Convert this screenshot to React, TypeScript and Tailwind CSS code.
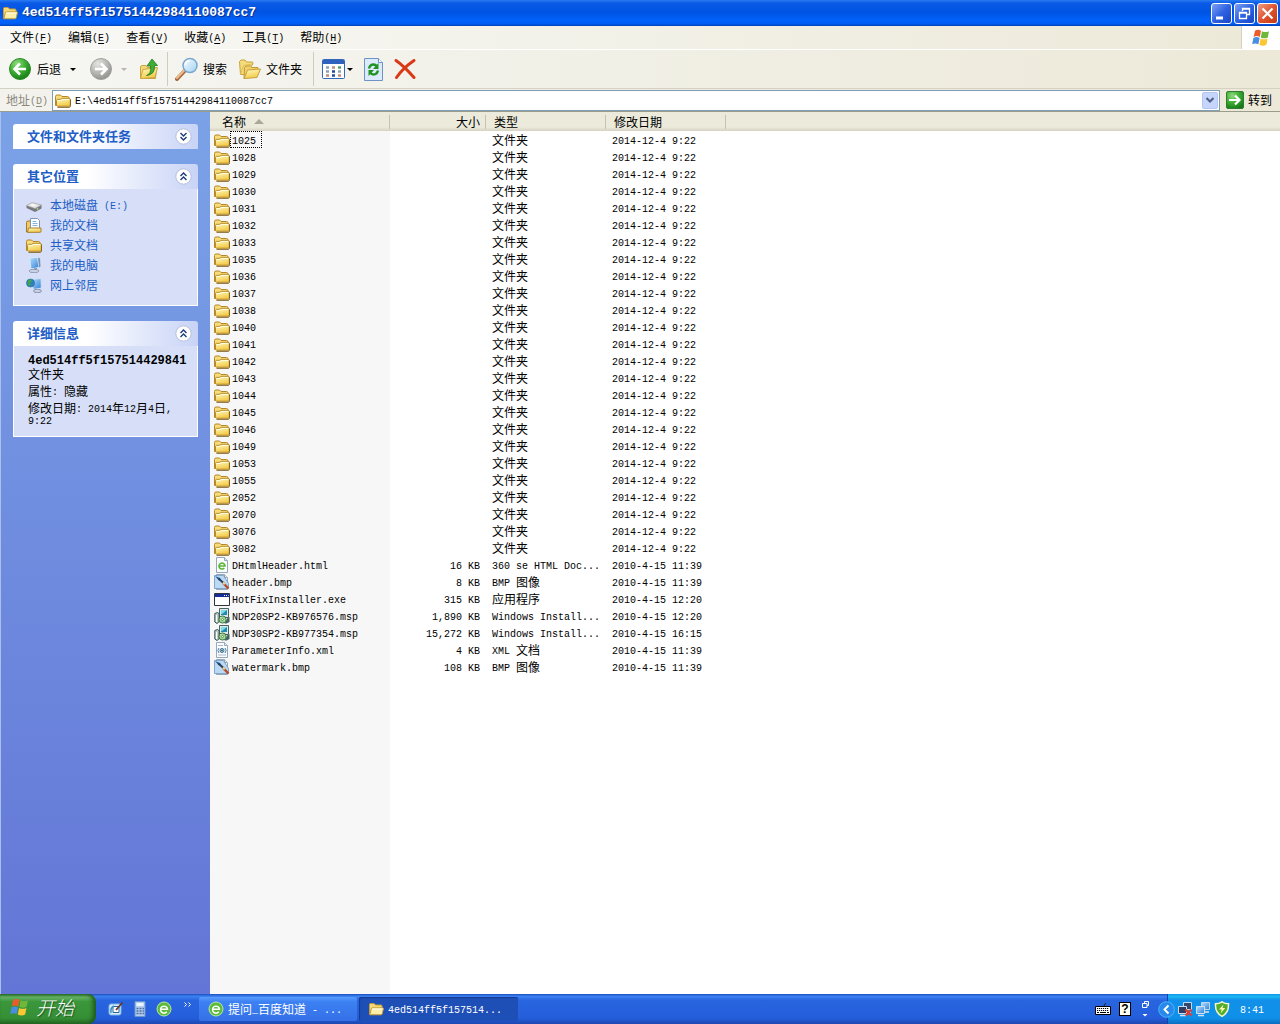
import { useState } from 'react';
import type { ReactNode } from 'react';

const folders = [
  '1025', '1028', '1029', '1030', '1031', '1032', '1033', '1035', '1036', '1037', '1038', '1040', '1041',
  '1042', '1043', '1044', '1045', '1046', '1049', '1053', '1055', '2052', '2070', '3076', '3082',
];

type FileRow = { name: string; kind: string; size: string; type: string; date: string };

const rows: FileRow[] = [
  ...folders.map(name => ({ name, kind: 'folder', size: '', type: '文件夹', date: '2014-12-4 9:22' })),
  { name: 'DHtmlHeader.html', kind: 'html', size: '16 KB', type: '360 se HTML Doc...', date: '2010-4-15 11:39' },
  { name: 'header.bmp', kind: 'bmp', size: '8 KB', type: 'BMP 图像', date: '2010-4-15 11:39' },
  { name: 'HotFixInstaller.exe', kind: 'exe', size: '315 KB', type: '应用程序', date: '2010-4-15 12:20' },
  { name: 'NDP20SP2-KB976576.msp', kind: 'msp', size: '1,890 KB', type: 'Windows Install...', date: '2010-4-15 12:20' },
  { name: 'NDP30SP2-KB977354.msp', kind: 'msp', size: '15,272 KB', type: 'Windows Install...', date: '2010-4-15 16:15' },
  { name: 'ParameterInfo.xml', kind: 'xml', size: '4 KB', type: 'XML 文档', date: '2010-4-15 11:39' },
  { name: 'watermark.bmp', kind: 'bmp', size: '108 KB', type: 'BMP 图像', date: '2010-4-15 11:39' },
];

const menus = [
  ['文件', 'F'], ['编辑', 'E'], ['查看', 'V'], ['收藏', 'A'], ['工具', 'T'], ['帮助', 'H'],
];

// Latin runs are set half as wide as the Chinese characters
const Mixed = ({ text }: { text: string }) => <>
    {text.split(/([\x20-\x7e]+)/).filter(Boolean).map((part, i) => /^[\x20-\x7e]/.test(part)
      ? <span key={i} className="font-['Liberation_Mono',monospace] text-[10px] leading-none align-[1px] whitespace-pre">{part}</span>
      : part)}
  </>;

const Defs = () => <svg className="absolute w-0 h-0" aria-hidden="true">
    <defs>
      <linearGradient id="gold" x1="0" y1="0" x2="0.4" y2="1"><stop offset="0" stopColor="#fffbc4" /><stop offset="1" stopColor="#f3cb4a" /></linearGradient>
      <radialGradient id="green" cx="0.35" cy="0.25" r="0.8"><stop offset="0" stopColor="#8fdc7c" /><stop offset="0.5" stopColor="#3fae35" /><stop offset="1" stopColor="#157a14" /></radialGradient>
      <radialGradient id="gray" cx="0.35" cy="0.25" r="0.8"><stop offset="0" stopColor="#e4e4e2" /><stop offset="0.6" stopColor="#b3b3b0" /><stop offset="1" stopColor="#8d8d8b" /></radialGradient>
      <linearGradient id="lens" x1="0" y1="0" x2="1" y2="1"><stop offset="0" stopColor="#fafdff" /><stop offset="1" stopColor="#9fd3f2" /></linearGradient>
      <linearGradient id="screen" x1="0" y1="0" x2="1" y2="1"><stop offset="0" stopColor="#b9e2ff" /><stop offset="1" stopColor="#2f7fd6" /></linearGradient>
    </defs>
  </svg>;

const Folder = () => <svg className="w-4 h-4 shrink-0" viewBox="0 0 16 16">
    <path d="M.5 13.500V4.500Q.5 3 2 3h3.500L7 4.500h5.500Q14 4.500 14 6v7.500z" fill="#f7dd7a" stroke="#b5862a" />
    <path d="M1.500 13.500V8.500Q1.500 7.300 2.700 7.300h3L7 6.300h7q1.300 0 1.300 1.200V13q0 1.200-1.200 1.200H2.500z" fill="url(#gold)" stroke="#b98b2c" />
    <path d="M2.500 15.300h12q1.100-.4 1.100-1.800V7.500" fill="none" stroke="#7d5d1c" />
    <path d="M2.800 8.500h3.400l1.400-1H14" fill="none" stroke="#fffde2" />
  </svg>;

const OpenFolder = () => <svg className="w-4 h-4 shrink-0" viewBox="0 0 16 16">
    <path d="M1.500 13.500V3.500q0-1 1-1h3.600L7.500 4H13q1 0 1 1v2" fill="#f4d975" stroke="#c69a34" />
    <path d="M1.800 13.800l1.500-6q.3-1 1.300-1h10q1 0 .8 1l-1.200 5q-.2 1-1.200 1z" fill="#fcefaa" stroke="#c49a35" />
    <path d="M4 8h10.500" stroke="#fffef0" />
  </svg>;

const ELogo = () => <svg className="w-4 h-4 shrink-0" viewBox="0 0 16 16">
    <circle cx="8" cy="8" r="7" fill="#5dbb3c" stroke="#b9e89f" />
    <path d="M4.500 8.300h7A3.500 3.500 0 1 0 10.800 10.800" fill="none" stroke="#fff" strokeWidth="1.500" />
  </svg>;

const FileIcon = ({ kind }: { kind: string }) => {
  if (kind === 'folder') return <Folder />;
  if (kind === 'exe') return <svg className="w-4 h-4 shrink-0" viewBox="0 0 16 16">
      <path d="M.5 2.500h15v12H.5z" fill="#fff" stroke="#30323c" />
      <path d="M1 3h14v3H1z" fill="#152d98" />
      <path d="M10 4.500h1M12 4.500h1M14 4.500h.6" stroke="#fff" />
    </svg>;
  if (kind === 'msp') return <svg className="w-4 h-4 shrink-0" viewBox="0 0 16 16">
      <path d="M5.500.5h9v9h-9z" fill="#e2e8e6" stroke="#47625f" />
      <path d="M7 2h6v5H7z" fill="#218ab3" />
      <path d="M7 2h6L8 6H7z" fill="#7bdde8" />
      <path d="M13.500 10l2-1v5l-3 1.500h-2z" fill="#436360" />
      <path d="M.8 5.500l2.800-1 1.500 1.200v8L3 15.500.8 14z" fill="#c2cdca" stroke="#34534f" />
      <path d="M2.500 7v7" stroke="#f8fff8" />
      <circle cx="8.500" cy="11.500" r="3.600" fill="#9bd489" stroke="#205e35" strokeWidth=".8" />
      <path d="M6.500 9l2 2.400 2.700 1.800" stroke="#ddfacc" />
      <circle cx="8.500" cy="11.500" r="1" fill="#fff" stroke="#346d38" strokeWidth=".6" />
    </svg>;
  return <svg className="w-4 h-4 shrink-0" viewBox="0 0 16 16">
      <path d="M2.500.5h8l3 3v12h-11z" fill="#fbfcff" stroke="#95a8ba" />
      <path d="M10.500.5v3h3" fill="#dce7f0" stroke="#95a8ba" />
      {kind === 'html' && <path d="M5 9h6A3 3 0 1 0 10.300 11" fill="none" stroke="#58b531" strokeWidth="1.600" />}
      {kind === 'bmp' && <>
          <path d="M.5 1.500h9l5 8v5H.5z" fill="#b9d9f5" stroke="#6087b6" strokeWidth=".7" />
          <path d="M1 2l5 2 1.500 3-3-1z" fill="#1d5698" />
          <path d="M4.500 4.500l5.500 5" stroke="#2b3f55" strokeWidth="2" />
          <path d="M9.500 9.300l5 5.200" stroke="#b44f2c" strokeWidth="2.400" />
          <path d="M9 8.500l1.800 1.800" stroke="#f5d694" strokeWidth="2" />
        </>}
      {kind === 'xml' && <>
          <path d="M4 3.500h5M4 13h8" stroke="#a8b8cb" />
          <path d="M5 6L3.800 8.500 5 11M11 6l1.200 2.500L11 11" fill="none" stroke="#437fad" />
          <circle cx="8" cy="8.500" r="2" fill="#b2d6df" stroke="#3b6986" />
          <circle cx="8" cy="8.500" r=".8" fill="#234a5a" />
        </>}
    </svg>;
};

const Flag = ({ className = 'w-5 h-5' }: { className?: string }) => <svg className={className + ' shrink-0'} viewBox="0 0 20 20">
    <path d="M4 2.800q3-2 6 0L8.800 9q-3-1.800-6.200 0z" fill="#ec5b2b" />
    <path d="M11 3.200q3.500 1.800 7 0l-1.200 6.200q-3.500 1.800-7 0z" fill="#6fb83c" />
    <path d="M2.400 10q3.200-1.800 6.200 0l-1.200 6.300q-3-1.800-6.200 0z" fill="#4a8ee4" />
    <path d="M9.600 10.400q3.500 1.800 7 0l-1.200 6.300q-3.500 1.900-7 0z" fill="#fbc732" />
  </svg>;

const Caret = ({ className = 'fill-black' }: { className?: string }) => <svg className={'w-[6px] h-[3px] ' + className} viewBox="0 0 6 3"><path d="M0 0h6L3 3z" /></svg>;

const Arrow = ({ gray = false }: { gray?: boolean }) => <svg className="w-[22px] h-[22px]" viewBox="0 0 22 22">
    <circle cx="11" cy="11" r="10.500" fill={gray ? 'url(#gray)' : 'url(#green)'} stroke={gray ? '#a0a09e' : '#2b8a28'} />
    <path d={gray ? 'M5 11h11M11 5.500l5.500 5.500-5.500 5.500' : 'M17 11H6M11 5.500L5.500 11l5.500 5.500'} fill="none" stroke="#fff" strokeWidth="2.600" />
  </svg>;

const Monitor = ({ mark }: { mark: string }) => <svg className="w-4 h-4 shrink-0" viewBox="0 0 16 16">
    {mark === 'pc' && <>
        <path d="M3.500 1l8-.5 1.500 10-8 1.500z" fill="url(#screen)" stroke="#d6e9fb" />
        <path d="M12 .5l2 1 .5 8-1.500 1z" fill="#7890b8" />
        <path d="M8 11h3v2H8z" fill="#8ea0c2" />
        <ellipse cx="8" cy="14" rx="5" ry="1.700" fill="#c9d2e3" stroke="#7b88a4" strokeWidth=".7" />
      </>}
    {mark === 'net' && <>
        <path d="M4.500 2.500L15 1.500l.3 9.500-7.800 1.500z" fill="url(#screen)" stroke="#d0dff5" />
        <ellipse cx="11.500" cy="14" rx="4" ry="1.700" fill="#cad1e0" stroke="#69779a" strokeWidth=".7" />
        <circle cx="4.500" cy="6" r="4" fill="#2d83bd" stroke="#20639a" strokeWidth=".6" />
        <path d="M2 3.500q2-2 4-1L5 5 3.500 6 5 8 4 9.500 1.500 7z" fill="#46a44b" />
      </>}
    {(mark === 'tray' || mark === 'off') && <>
        <path d="M6.500 1.500h8v7h-8z" fill={mark === 'off' ? '#34486f' : 'url(#screen)'} stroke="#bdd9f5" />
        <path d="M1.500 5.500h8v7h-8z" fill={mark === 'off' ? '#2d3e62' : 'url(#screen)'} stroke="#cbe1f7" />
        <path d="M3 14.500h6M10 11h4" stroke="#d9e4ef" strokeWidth="1.500" />
        {mark === 'off' && <path d="M8.500 8.500l6 6M14.500 8.500l-6 6" stroke="#e23c2c" strokeWidth="2.200" />}
      </>}
  </svg>;

const Disk = () => <svg className="w-4 h-4 shrink-0" viewBox="0 0 16 16">
    <path d="M.5 8.500L6 6l9.500 2v3.500L9 15l-8.500-4z" fill="#77787f" />
    <path d="M.5 8.500L6 5.500 15.500 8 9 11.500z" fill="#e4e3e1" stroke="#a0a0a5" strokeWidth=".6" />
    <path d="M3.500 8.300L6.500 7l4 1L8 9.500z" fill="#f9f9f9" />
    <circle cx="11.500" cy="11.800" r=".9" fill="#9be46d" />
  </svg>;

const Docs = () => <svg className="w-4 h-4 shrink-0" viewBox="0 0 16 16">
    <path d="M.5 15V5.500Q.5 4 2 4h3v11z" fill="#efc966" stroke="#a47a2e" />
    <path d="M4.500 1.500h7l2 2v9h-9z" fill="#fff" stroke="#7d95b6" />
    <path d="M6.500 4.500h4M6.500 6.500h5M6.500 8.500h5" stroke="#83b4d9" />
    <path d="M1.500 15.300l1-4.300h12.500v3.300q0 1-1 1z" fill="url(#gold)" stroke="#ab8132" />
  </svg>;

const Toggle = ({ open, onClick, label }: { open: boolean; onClick: () => void; label: string }) => <button aria-label={label} onClick={onClick} className="w-[17px] h-[17px]">
    <svg viewBox="0 0 17 17" className="w-full h-full">
      <circle cx="8.500" cy="8.500" r="7.700" fill="#fff" stroke="#b3bedb" />
      <path d={open ? 'M5.500 8l3-3 3 3M5.500 12l3-3 3 3' : 'M5.500 5l3 3 3-3M5.500 9l3 3 3-3'} fill="none" stroke="#1d3b78" strokeWidth="1.400" />
    </svg>
  </button>;

const Panel = ({ title, initial, children }: { title: string; initial: boolean; children?: ReactNode }) => {
  const [open, setOpen] = useState(initial);
  return <section>
      <div className="flex items-center justify-between h-[25px] pl-3.5 pr-1.5 rounded-t-[3px] bg-linear-to-r from-white from-40% to-[#c8d3f6]">
        <h2 className="text-[13px] leading-5 pb-0.5 font-bold text-[#215dc6]">{title}</h2>
        <Toggle open={open} onClick={() => setOpen(!open)} label={title} />
      </div>
      {open && children && <div className="border border-t-0 border-white bg-[#d6dff7]">{children}</div>}
    </section>;
};

const Divider = () => <span className="w-px h-[34px] bg-[#cfccbc]" />;

const Win = ({ label, red = false, children }: { label: string; red?: boolean; children: ReactNode }) => <button aria-label={label} className={`w-[21px] h-[21px] rounded-[3px] border border-white ${red ? 'bg-linear-to-br from-[#ee9a80] via-[#e0532f] to-[#c33c14]' : 'bg-linear-to-br from-[#7d9ff2] via-[#2f62e2] to-[#1846c6]'}`}>
    <svg viewBox="0 0 19 19" fill="none" stroke="#fff" className="w-full h-full">{children}</svg>
  </button>;

const places = [
  { text: '本地磁盘 (E:)', icon: <Disk /> },
  { text: '我的文档', icon: <Docs /> },
  { text: '共享文档', icon: <Folder /> },
  { text: '我的电脑', icon: <Monitor mark="pc" /> },
  { text: '网上邻居', icon: <Monitor mark="net" /> },
];

const TitleBar = () => <header className="flex items-center h-[26px] pl-0.5 pr-0.5 bg-[linear-gradient(to_bottom,#2a7cf0_0%,#0a5ae6_12%,#0053e2_45%,#0062fb_80%,#005cf2_92%,#0040b4_100%)]">
    <OpenFolder />
    <h1 className="flex-1 pl-1 text-[13px] font-bold font-['Liberation_Mono',monospace] text-white text-shadow-[1px_1px_0_#0b2f8a]">4ed514ff5f15751442984110087cc7</h1>
    <div className="flex gap-0.5">
      <Win label="最小化"><path d="M4 14h7" strokeWidth="3" /></Win>
      <Win label="还原"><path d="M7.500 7V4.500h7v6H12M7 5h8M4.500 8.500h7v6h-7zM4 9h8" strokeWidth="1.300" /></Win>
      <Win label="关闭" red><path d="M4.500 4.500l10 10M14.500 4.500l-10 10" strokeWidth="2.200" /></Win>
    </div>
  </header>;

const Toolbar = () => <div className="flex items-center h-10 pl-[9px] border-t border-b border-t-white border-b-[#d5d2c4] bg-linear-to-r from-[#f6f6f3] to-[#ece9d8]">
    <button className="flex items-center gap-1.5"><Arrow />后退</button>
    <button aria-label="后退列表" className="ml-[9px]"><Caret /></button>
    <button aria-label="前进" className="ml-3.5"><Arrow gray /></button>
    <button aria-label="前进列表" className="ml-[9px] mr-3"><Caret className="fill-[#b8b6aa]" /></button>
    <button aria-label="向上" className="mr-2">
      <svg className="w-5 h-[22px]" viewBox="0 0 20 22">
        <path d="M1.500 20.500V8.500l1.500-1h4l1.500 2h9l-1 11z" fill="#f3d972" stroke="#c8a243" />
        <path d="M1.500 20.500l2.500-9 14.500-2-2.500 10z" fill="url(#gold)" stroke="#cda745" />
        <path d="M7.500 17.500q5-1.500 4-9.500H8L13 1l5.500 6.500h-3q.8 9-8 10z" fill="#3fae35" stroke="#1d7a1d" strokeWidth=".8" />
      </svg>
    </button>
    <Divider />
    <button className="flex items-center gap-[5px] ml-[7px]">
      <svg className="w-[23px] h-6" viewBox="0 0 23 24">
        <path d="M2 22l8-8.500" stroke="#a7693d" strokeWidth="4" strokeLinecap="round" />
        <path d="M2 21l7.500-8" stroke="#eebc8e" strokeWidth="2" strokeLinecap="round" />
        <circle cx="15" cy="8.500" r="7" fill="url(#lens)" stroke="#7aa7d2" strokeWidth="1.500" />
        <path d="M10.500 8q.5-4 4-4.500" fill="none" stroke="#fff" strokeWidth="1.500" />
      </svg>
      搜索
    </button>
    <button className="flex items-center gap-[5px] ml-3 mr-[11px]">
      <svg className="w-[22px] h-[22px]" viewBox="0 0 22 22">
        <path d="M1.500 16.500l-1-13L2 2h4l1.500 2h6l.5 2-9 10.500z" fill="#f5dc7b" stroke="#caa23e" />
        <path d="M1.500 16.500l3-9 9-1.500" fill="none" stroke="#dfbd5a" />
        <path d="M5 20.500l.5-11L7 8h4.500l1 1.500H19v3" fill="#f0d269" stroke="#c29836" />
        <path d="M5 20.500L8.500 12l13-1L18 19.500z" fill="url(#gold)" stroke="#c79e3b" />
      </svg>
      文件夹
    </button>
    <Divider />
    <button aria-label="查看" className="flex items-center gap-0.5 ml-2">
      <svg className="w-[23px] h-5" viewBox="0 0 23 20">
        <rect x=".5" y=".5" width="22" height="19" rx="1" fill="#fff" stroke="#3268b8" />
        <path d="M1 1h21v4H1z" fill="#2f62be" />
        <path d="M4 8.500h3M4 12.500h3M16 12.500h3" stroke="#8e9fb8" strokeWidth="2.400" />
        <path d="M10 8.500h3M4 16.500h3M16 16.500h3" stroke="#c08d7d" strokeWidth="2.400" />
        <path d="M10 12.500h3M10 16.500h3" stroke="#254b99" strokeWidth="2.400" />
        <path d="M16 8.500h3" stroke="#4c9c64" strokeWidth="2.400" />
      </svg>
      <Caret />
    </button>
    <button aria-label="刷新" className="ml-[11px]">
      <svg className="w-[19px] h-[23px]" viewBox="0 0 19 23">
        <path d="M.5.5h14l4 4v18H.5z" fill="#dcebfb" stroke="#6f93c6" />
        <path d="M14.500.5v4h4" fill="#fff" stroke="#6f93c6" />
        <path d="M5 10.500Q6 6.500 9.500 6.500q2 0 3.500 2M14 12.500q-1 4-4.500 4-2 0-3.500-2" fill="none" stroke="#219324" strokeWidth="2.400" />
        <path d="M14.500 5v6H9zM4.500 18v-6H10z" fill="#219324" />
      </svg>
    </button>
    <button aria-label="删除" className="ml-[11px]">
      <svg className="w-[22px] h-5" viewBox="0 0 22 20">
        <path d="M2 1.500Q10 7 20 18.500M20 1.500Q9 9 2.500 18.500" fill="none" stroke="#d93a16" strokeWidth="3" strokeLinecap="round" />
      </svg>
    </button>
  </div>;

const AddressBar = () => <div className="flex items-center h-[23px] pl-1.5 pr-2 border-b border-[#9b9d8c] bg-linear-to-r from-[#f3f2ed] to-[#ece9d8]">
    <label htmlFor="address" className="w-[46px] text-[#8b897c]"><Mixed text="地址(" /><u><Mixed text="D" /></u><Mixed text=")" /></label>
    <div className="flex flex-1 items-center h-[21px] pl-0.5 pr-px border border-[#7f9db9] bg-white">
      <Folder />
      <input id="address" defaultValue="E:\4ed514ff5f15751442984110087cc7" className="flex-1 pl-1 pt-[3px] outline-none font-['Liberation_Mono',monospace] text-[10px]" />
      <button aria-label="地址列表" className="flex items-center justify-center w-4 h-[17px] rounded-[2px] border border-[#b5c6f5] bg-[#c6d5fb]">
        <svg className="w-2 h-[6px]" viewBox="0 0 8 6"><path d="M.5 1L4 4.500 7.500 1" fill="none" stroke="#4d6185" strokeWidth="2" /></svg>
      </button>
    </div>
    <button className="flex items-center gap-1 ml-1.5">
      <svg className="w-[18px] h-[18px]" viewBox="0 0 18 18">
        <rect x=".5" y=".5" width="17" height="17" rx="1.500" fill="url(#green)" stroke="#317b35" />
        <path d="M3 9h10M9 4.500L13.500 9 9 13.500" fill="none" stroke="#fff" strokeWidth="2.200" />
      </svg>
      转到
    </button>
  </div>;

const Sidebar = () => <aside className="w-[210px] shrink-0 px-3 pt-3 bg-linear-to-b from-[#7ba2e7] to-[#6375d6] border-l border-[#a9c0ee] flex flex-col gap-[15px]">
    <Panel title="文件和文件夹任务" initial={false} />
    <Panel title="其它位置" initial>
      <ul className="pt-1.5 pb-[10px] pl-3">
        {places.map(place => <li key={place.text} className="h-5">
            <a href="#" className="flex items-center gap-2 h-5 text-[#215dc6]">{place.icon}<span className="leading-5"><Mixed text={place.text} /></span></a>
          </li>)}
      </ul>
    </Panel>
    <Panel title="详细信息" initial>
      <div className="flex flex-col pt-[9px] pb-[10px] pl-3.5 leading-3">
        <p className="h-[13px] font-['Liberation_Mono',monospace] font-bold whitespace-nowrap">4ed514ff5f157514429841</p>
        <p className="h-3">文件夹</p>
        <p className="h-3 mt-[5px]"><Mixed text="属性: 隐藏" /></p>
        <p className="h-3 mt-[5px]"><Mixed text="修改日期: 2014年12月4日," /></p>
        <p className="h-3"><Mixed text="9:22" /></p>
      </div>
    </Panel>
  </aside>;

const FileList = () => <main className="flex-1 min-w-0 bg-[linear-gradient(to_right,#f7f7f7_180px,#ffffff_180px)]">
    <table className="w-full table-fixed border-collapse">
      <colgroup>
        <col className="w-[180px]" />
        <col className="w-[96px]" />
        <col className="w-[120px]" />
        <col className="w-[120px]" />
        <col />
      </colgroup>
      <thead>
        <tr className="h-[19px] bg-[linear-gradient(to_bottom,#ebeadb_80%,#d6d2c2_100%)] text-left leading-[19px]">
          <th className="p-0 font-normal"><div className="flex items-center gap-2 pl-3 h-[19px]">名称<svg className="w-[10px] h-[5px]" viewBox="0 0 10 5"><path d="M5 0l5 5H0z" fill="#aca899" /></svg><i className="ml-auto w-px h-3.5 bg-[#c5c2b2]" /></div></th>
          <th className="p-0 font-normal"><div className="flex items-center justify-end gap-[5px] h-[19px]">大小<i className="w-px h-3.5 bg-[#c5c2b2]" /></div></th>
          <th className="p-0 font-normal"><div className="flex items-center justify-between pl-2 h-[19px]">类型<i className="w-px h-3.5 bg-[#c5c2b2]" /></div></th>
          <th className="p-0 font-normal"><div className="flex items-center justify-between pl-2 h-[19px]">修改日期<i className="w-px h-3.5 bg-[#c5c2b2]" /></div></th>
          <td />
        </tr>
      </thead>
      <tbody>
        {rows.map((row, i) => <tr key={row.name} className="h-[17px] leading-[17px] whitespace-nowrap">
            <td className="p-0">
              <div className="flex items-center h-[17px] pl-1">
                <FileIcon kind={row.kind} />
                <span className={i === 0 ? 'h-[17px] pl-0.5 pr-1.5 outline-1 outline-dotted -outline-offset-1 outline-black' : 'h-[17px] pl-0.5'}><Mixed text={row.name} /></span>
              </div>
            </td>
            <td className="p-0 pr-1.5 text-right"><Mixed text={row.size} /></td>
            <td className="p-0 pl-1.5"><Mixed text={row.type} /></td>
            <td className="p-0 pl-1.5"><Mixed text={row.date} /></td>
            <td />
          </tr>)}
      </tbody>
    </table>
  </main>;

const Taskbar = () => <footer className="flex items-stretch h-[30px] text-white bg-[linear-gradient(to_bottom,#1f4fc0_0%,#3a82f2_8%,#2a65e0_20%,#245edb_80%,#1c48b0_100%)]">
    <button className="flex items-center gap-1.5 w-24 pl-[9px] pb-1 rounded-r-lg bg-[linear-gradient(to_bottom,#2f7a2f_0%,#68b468_10%,#3c973c_25%,#358f35_80%,#256c25_100%)] shadow-[inset_-3px_0_4px_#1d5a1d]">
      <Flag className="w-[21px] h-[21px]" />
      <span className="text-[19px] leading-6 italic font-light text-shadow-[1px_1px_1px_#1d4f1d]">开始</span>
    </button>
    <div className="flex items-center gap-2 pl-3 w-[102px]">
      <button aria-label="显示桌面">
        <svg className="w-4 h-4" viewBox="0 0 16 16">
          <rect x="1" y="3" width="12" height="11" rx="2" fill="#d8ecfa" stroke="#79b4e8" />
          <path d="M5 5.500h6v6H5z" fill="#fff" stroke="#27649a" />
          <path d="M14.500 1.500L8 9" stroke="#6b3a24" strokeWidth="1.800" />
          <path d="M3 12q-1-5 3-7" fill="none" stroke="#348bc6" strokeWidth="1.500" />
        </svg>
      </button>
      <button aria-label="计算器">
        <svg className="w-4 h-4" viewBox="0 0 16 16">
          <path d="M3 .5h10v15H3z" fill="#b4cdee" stroke="#6c94cf" />
          <path d="M4.500 2h7v3h-7z" fill="#e9f5ff" />
          <path d="M4.500 7.500h2M7.500 7.500h2M10.500 7.500H12M4.500 10h2M7.500 10h2M10.500 10H12M4.500 12.500h2M7.500 12.500h2M10.500 12.500H12" stroke="#4b6ea8" strokeWidth="1.400" />
        </svg>
      </button>
      <button aria-label="浏览器"><ELogo /></button>
      <button aria-label="更多" className="self-start mt-2 ml-1">
        <svg className="w-2 h-[5px]" viewBox="0 0 8 5"><path d="M.5.5l2 2-2 2M4.500.5l2 2-2 2" fill="none" stroke="#fff" /></svg>
      </button>
    </div>
    <div className="flex flex-1 gap-0.5 pt-[3px] pb-[3px] pl-px">
      <button className="flex items-center gap-1 w-[158px] pl-[9px] rounded-[2px] whitespace-nowrap bg-linear-to-b from-[#5a9bfc] via-[#3c81f3] via-20% to-[#3570e6]"><ELogo /><span><Mixed text="提问_百度知道 - ..." /></span></button>
      <button className="flex items-center gap-1 w-[159px] pl-[9px] rounded-[2px] whitespace-nowrap bg-[#1e4fb6] shadow-[inset_1px_1px_1px_#143a8e]"><OpenFolder /><span><Mixed text="4ed514ff5f157514..." /></span></button>
    </div>
    <div className="flex items-center gap-2 pr-4">
      <svg className="w-4 h-4" viewBox="0 0 16 16">
        <path d="M9 5q0-2 2-2.500" fill="none" stroke="#1a1a1a" />
        <path d="M.5 5.500h15v8H.5z" fill="#fff" stroke="#000" />
        <path d="M2 7.500h12M2 9.500h12" stroke="#000" strokeDasharray="1.200 .8" />
        <path d="M2 11.500h2M5 11.500h6M12 11.500h2" stroke="#000" />
      </svg>
      <span className="flex items-center justify-center w-3 h-[14px] border border-black bg-[#fffff0] text-black font-bold text-[12px] leading-3 font-['Liberation_Sans',sans-serif]">?</span>
      <svg className="w-3 h-[18px]" viewBox="0 0 12 18">
        <path d="M5.500 3V1.500h4v4H8M3.500 3.500H8v4H3.500z" fill="none" stroke="#fff" />
        <path d="M3.500 14h5L6 16.500z" fill="#fff" />
      </svg>
    </div>
    <div className="flex items-center w-[113px] border-l border-[#1042af] bg-[linear-gradient(to_bottom,#1290e8_0%,#19b9f3_8%,#1290e9_20%,#0f90e8_80%,#0b6dc0_100%)]">
      <button aria-label="显示隐藏的图标" className="-ml-[10px] mr-0.5">
        <svg className="w-[17px] h-[17px]" viewBox="0 0 17 17"><circle cx="8.500" cy="8.500" r="7.800" fill="#2789ec" stroke="#4bb5fb" /><path d="M10.500 4.500l-4 4 4 4" fill="none" stroke="#fff" strokeWidth="2" /></svg>
      </button>
      <Monitor mark="off" />
      <span className="ml-0.5"><Monitor mark="tray" /></span>
      <svg className="w-4 h-4 ml-[3px]" viewBox="0 0 16 16">
        <path d="M8 .8q3 2 6.500 2 .5 9-6.500 12.500Q1 11.800 1.500 2.800 5 2.800 8 .8z" fill="#55ab2b" stroke="#f1f8cd" strokeWidth="1.500" />
        <path d="M9.500 3.500L5 8.500h2.800l-1.300 4L11.300 7H8.500z" fill="#fffbb0" />
      </svg>
      <time className="ml-[10px]"><Mixed text="8:41" /></time>
    </div>
  </footer>;

const App = () => {
  return <div className="flex flex-col min-h-screen bg-white text-black text-xs font-['Noto_Sans_CJK_SC',sans-serif]">
      <Defs />
      <TitleBar />
      <nav className="flex items-stretch h-[23px] bg-linear-to-r from-[#f8f8f6] to-[#ece9d8]">
        <div className="flex flex-1 items-center gap-4 pl-[10px] pb-0.5">
          {menus.map(([label, key]) => <button key={key}>{label}<Mixed text="(" /><u><Mixed text={key} /></u><Mixed text=")" /></button>)}
        </div>
        <div className="flex items-center justify-center w-[39px] bg-white border-l border-[#d5d2c4]"><Flag /></div>
      </nav>
      <Toolbar />
      <AddressBar />
      <div className="flex flex-1">
        <Sidebar />
        <FileList />
      </div>
      <Taskbar />
    </div>;
};

export default App;
